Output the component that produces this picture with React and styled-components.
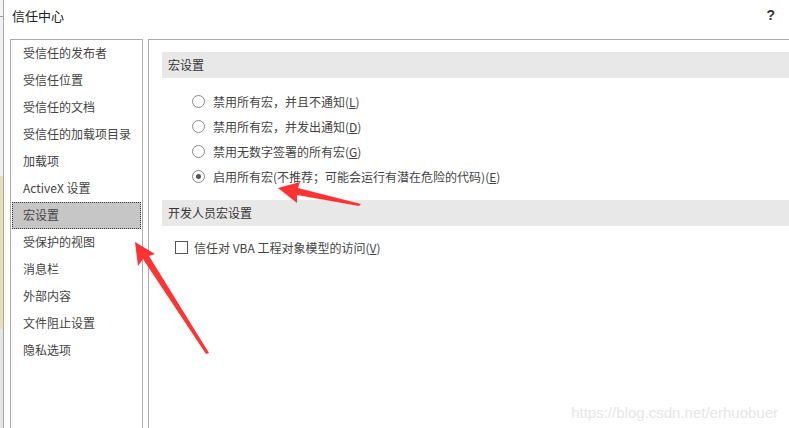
import React from 'react';
import styled, { createGlobalStyle } from 'styled-components';

const GlobalStyle = createGlobalStyle`
  html, body {
    margin: 0;
    padding: 0;
    background: #fff;
    overflow: hidden;
  }
  body {
    font-family: "Noto Sans CJK SC", "Noto Sans", sans-serif;
    font-size: 12px;
    color: #444;
  }
`;

const Page = styled.div`
  position: relative;
  display: flex;
  width: 789px;
  height: 428px;
  overflow: hidden;
`;

// sliver of the Excel window behind the dialog
const Behind = styled.div`
  width: 3px;
  display: flex;
  flex-direction: column;
  background: #f4f4f4;
`;

const BehindBlock = styled.div`
  height: ${p => p.h}px;
  background: ${p => p.bg};
`;

const Dialog = styled.div`
  flex: 1;
  display: flex;
  flex-direction: column;
  border-left: 1px solid #a8a8a8;
  background: #fff;
`;

const TitleBar = styled.div`
  height: 39px;
  display: flex;
  align-items: center;
  justify-content: space-between;
  padding: 0 14px 9px 8px;
  box-sizing: border-box;
  color: #222;
  font-size: 13px;
`;

const Help = styled.span`
  font-family: "Liberation Sans", sans-serif;
  font-size: 14px;
  font-weight: bold;
  color: #333;
`;

const Body = styled.div`
  flex: 1;
  display: flex;
  gap: 5px;
  padding-left: 6px;
`;

const Nav = styled.ul`
  width: 131px;
  margin: 0;
  padding: 0;
  list-style: none;
  border: 1px solid #ababab;
  border-bottom: none;
`;

const NavItem = styled.li`
  height: 27px;
  display: flex;
  align-items: center;
  padding: 0 0 2px 10px;
  margin: 0 1px;
  box-sizing: border-box;
  color: #444;
  background: ${p => (p.active ? '#c6c6c6' : 'transparent')};
  border: 1px ${p => (p.active ? 'dotted #333' : 'solid transparent')};
  white-space: nowrap;
`;

const Content = styled.div`
  flex: 1;
  border-left: 1px solid #ababab;
  border-top: 1px solid #ababab;
  padding: 12px 0 0 13px;
`;

const SectionHeader = styled.div`
  height: 26px;
  display: flex;
  align-items: center;
  padding: 0 0 2px 6px;
  box-sizing: border-box;
  background: #e8e8e8;
  color: #333;
`;

const OptionList = styled.div`
  display: flex;
  flex-direction: column;
  padding: 11px 0 11px 30px;
`;

const Option = styled.label`
  height: 25px;
  display: flex;
  align-items: center;
  gap: 8px;
  color: #444;
  white-space: nowrap;
`;

const Radio = styled.span`
  width: 11px;
  height: 11px;
  border: 1px solid #8a8a8a;
  border-radius: 50%;
  display: flex;
  align-items: center;
  justify-content: center;
  &::after {
    content: '';
    width: 5px;
    height: 5px;
    border-radius: 50%;
    background: ${p => (p.checked ? '#555' : 'transparent')};
  }
`;

const CheckRow = styled.label`
  display: flex;
  align-items: center;
  gap: 6px;
  padding: 13px 0 0 13px;
  color: #444;
`;

const Box = styled.span`
  width: 11px;
  height: 11px;
  border: 1px solid #555;
`;

const Key = styled.span`
  text-decoration: underline;
`;

const Arrows = styled.svg`
  position: absolute;
  left: 0;
  top: 0;
  pointer-events: none;
`;

const Watermark = styled.div`
  position: absolute;
  right: 11px;
  bottom: 7px;
  font-family: "Liberation Sans", Arial, sans-serif;
  font-size: 15px;
  color: #e6e6e6;
`;

const navItems = [
  '受信任的发布者',
  '受信任位置',
  '受信任的文档',
  '受信任的加载项目录',
  '加载项',
  'ActiveX 设置',
  '宏设置',
  '受保护的视图',
  '消息栏',
  '外部内容',
  '文件阻止设置',
  '隐私选项',
];

const macroOptions = [
  { text: '禁用所有宏，并且不通知', key: 'L' },
  { text: '禁用所有宏，并发出通知', key: 'D' },
  { text: '禁用无数字签署的所有宏', key: 'G' },
  { text: '启用所有宏(不推荐；可能会运行有潜在危险的代码)', key: 'E', checked: true },
];

export default function App() {
  return (
    <>
      <GlobalStyle />
      <Page>
        <Behind>
          <BehindBlock h={16} bg="#f4f4f4" />
          <BehindBlock h={1} bg="#9a9a9a" />
          <BehindBlock h={160} bg="#f0f0f0" />
          <BehindBlock h={154} bg="#e9dcb8" />
          <BehindBlock h={100} bg="#e6e6e6" />
        </Behind>
        <Dialog>
          <TitleBar>
            <span>信任中心</span>
            <Help>?</Help>
          </TitleBar>
          <Body>
            <Nav>
              {navItems.map(item => (
                <NavItem key={item} active={item === '宏设置'}>
                  {item}
                </NavItem>
              ))}
            </Nav>
            <Content>
              <SectionHeader>宏设置</SectionHeader>
              <OptionList>
                {macroOptions.map(o => (
                  <Option key={o.key}>
                    <Radio checked={o.checked} />
                    <span>
                      {o.text}(<Key>{o.key}</Key>)
                    </span>
                  </Option>
                ))}
              </OptionList>
              <SectionHeader>开发人员宏设置</SectionHeader>
              <CheckRow>
                <Box />
                <span>
                  信任对 VBA 工程对象模型的访问(<Key>V</Key>)
                </span>
              </CheckRow>
            </Content>
          </Body>
        </Dialog>

        {/* red annotation arrows */}
        <Arrows width="789" height="428" viewBox="0 0 789 428">
          <polygon
            fill="#ff3333"
            points="135,242 155,254 149,256 209,353 206,354 143,259 138,266"
          />
          <polygon
            fill="#ff3333"
            points="278,188 300,182 298,188 361,204 359,206 297,195 297,203"
          />
        </Arrows>
        <Watermark>https://blog.csdn.net/erhuobuer</Watermark>
      </Page>
    </>
  );
}
